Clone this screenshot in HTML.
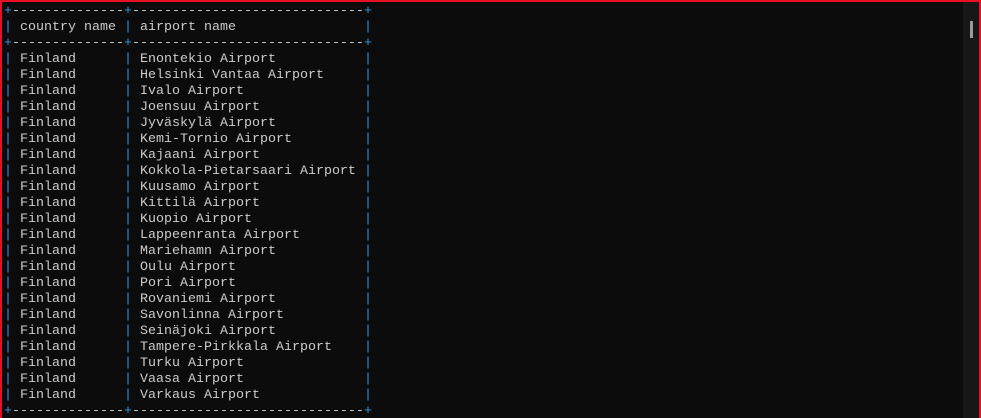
<!DOCTYPE html>
<html><head><meta charset="utf-8"><style>
html,body{margin:0;padding:0;background:#0c0c0c;width:981px;height:418px;overflow:hidden;position:relative}
.frame{position:absolute;left:0;top:0;width:977px;height:418px;border:2px solid #e81123;border-bottom:none}
.sb{position:absolute;left:963px;top:2px;width:16px;height:416px;background:#171717}
.th{position:absolute;left:970px;top:21px;width:3px;height:17px;background:#9a9a9a}
pre{position:absolute;left:4px;top:4px;margin:0;font-family:"Liberation Mono",monospace;font-size:13.33px;line-height:16px;color:#cccccc;letter-spacing:0}
b{font-weight:normal;color:#3a8fd9}
</style></head><body>
<div class="frame"></div><div class="sb"></div><div class="th"></div>
<pre><b>+</b>--------------<b>+</b>-----------------------------<b>+</b>
<b>|</b> country name <b>|</b> airport name                <b>|</b>
<b>+</b>--------------<b>+</b>-----------------------------<b>+</b>
<b>|</b> Finland      <b>|</b> Enontekio Airport           <b>|</b>
<b>|</b> Finland      <b>|</b> Helsinki Vantaa Airport     <b>|</b>
<b>|</b> Finland      <b>|</b> Ivalo Airport               <b>|</b>
<b>|</b> Finland      <b>|</b> Joensuu Airport             <b>|</b>
<b>|</b> Finland      <b>|</b> Jyväskylä Airport           <b>|</b>
<b>|</b> Finland      <b>|</b> Kemi-Tornio Airport         <b>|</b>
<b>|</b> Finland      <b>|</b> Kajaani Airport             <b>|</b>
<b>|</b> Finland      <b>|</b> Kokkola-Pietarsaari Airport <b>|</b>
<b>|</b> Finland      <b>|</b> Kuusamo Airport             <b>|</b>
<b>|</b> Finland      <b>|</b> Kittilä Airport             <b>|</b>
<b>|</b> Finland      <b>|</b> Kuopio Airport              <b>|</b>
<b>|</b> Finland      <b>|</b> Lappeenranta Airport        <b>|</b>
<b>|</b> Finland      <b>|</b> Mariehamn Airport           <b>|</b>
<b>|</b> Finland      <b>|</b> Oulu Airport                <b>|</b>
<b>|</b> Finland      <b>|</b> Pori Airport                <b>|</b>
<b>|</b> Finland      <b>|</b> Rovaniemi Airport           <b>|</b>
<b>|</b> Finland      <b>|</b> Savonlinna Airport          <b>|</b>
<b>|</b> Finland      <b>|</b> Seinäjoki Airport           <b>|</b>
<b>|</b> Finland      <b>|</b> Tampere-Pirkkala Airport    <b>|</b>
<b>|</b> Finland      <b>|</b> Turku Airport               <b>|</b>
<b>|</b> Finland      <b>|</b> Vaasa Airport               <b>|</b>
<b>|</b> Finland      <b>|</b> Varkaus Airport             <b>|</b>
<b>+</b>--------------<b>+</b>-----------------------------<b>+</b></pre>
</body></html>
